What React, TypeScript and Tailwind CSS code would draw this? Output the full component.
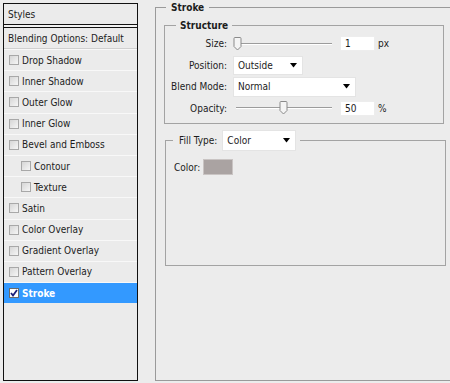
import React from 'react';

const font = { fontFamily: '"DejaVu Sans Condensed", "Liberation Sans", sans-serif' };

const effects: { label: string; indent?: boolean; active?: boolean }[] = [
  { label: 'Drop Shadow' },
  { label: 'Inner Shadow' },
  { label: 'Outer Glow' },
  { label: 'Inner Glow' },
  { label: 'Bevel and Emboss' },
  { label: 'Contour', indent: true },
  { label: 'Texture', indent: true },
  { label: 'Satin' },
  { label: 'Color Overlay' },
  { label: 'Gradient Overlay' },
  { label: 'Pattern Overlay' },
  { label: 'Stroke', active: true },
];

function CheckBox({ checked }: { checked?: boolean }) {
  if (checked) {
    return (
      <span className="w-[10px] h-[10px] border border-[#6b6b6b] bg-white flex items-center justify-center shrink-0">
        <svg width="8" height="8" viewBox="0 0 8 8">
          <path d="M1 4 L3 6.5 L7 1" fill="none" stroke="#1b1f7a" strokeWidth="1.8" />
        </svg>
      </span>
    );
  }
  return <span className="w-[10px] h-[10px] border border-[#a8a8a8] bg-gradient-to-br from-[#d6d6d6] to-[#f6f6f6] shrink-0" />;
}

function Dropdown({ value, width, height }: { value: string; width: string; height: string }) {
  return (
    <div className={`${width} ${height} bg-white flex items-center justify-between pl-[4px] pr-[5px] border border-[#e4e4e4]`}>
      <span>{value}</span>
      <svg width="7" height="5" viewBox="0 0 7 5">
        <path d="M0 0 H7 L3.5 4.5 Z" fill="#000" />
      </svg>
    </div>
  );
}

function Slider({ thumb }: { thumb: number }) {
  return (
    <div className="relative w-[100px] h-[14px]">
      <div className="absolute left-[3px] right-[1px] top-[6px] h-[2px] border-t border-[#9c9c9c] border-b border-b-white" />
      <svg className="absolute top-0" style={{ left: thumb }} width="9" height="14" viewBox="0 0 9 14">
        <path d="M1 1.5 Q1 0.5 2 0.5 H7 Q8 0.5 8 1.5 V9.5 L4.5 13 L1 9.5 Z" fill="#f4f4f4" stroke="#8a8a8a" />
      </svg>
    </div>
  );
}

function NumberBox({ value }: { value: string }) {
  return (
    <div className="w-[35px] h-[15px] bg-white border border-[#ededed] flex items-center pl-[4px]">{value}</div>
  );
}

export default function App() {
  return (
    <div className="w-[450px] h-[383px] bg-[#ececec] overflow-hidden flex text-[10px] text-[#1c1c1c]" style={font}>
      {/* Styles list */}
      <div className="ml-[3px] mt-[3px] w-[135px] h-[378px] border border-[#111] bg-[#ebebeb] flex flex-col shrink-0">
        <div className="h-[21px] flex items-center pl-[4px] border-b border-[#111]">Styles</div>
        <div className="h-[2px] bg-[#f2f2f2]" />
        <div className="h-[22px] flex items-center pl-[4px] border-t border-[#111] border-b border-b-[#d0d0d0]">
          Blending Options: Default
        </div>
        {effects.map((e) => (
          <div
            key={e.label}
            className={`h-[21.2px] flex items-center gap-[3px] border-t border-[#f8f8f8] ${e.indent ? 'pl-[17px]' : 'pl-[5px]'} ${
              e.active ? 'bg-[#3399ff] text-white font-bold' : ''
            }`}
          >
            <CheckBox checked={e.active} />
            <span>{e.label}</span>
          </div>
        ))}
      </div>

      {/* Stroke panel */}
      <fieldset className="ml-[17px] w-[310px] h-[381px] border border-[#9a9a9a] shrink-0">
        <legend className="ml-[10px] px-[5px] font-bold">Stroke</legend>

        <fieldset className="ml-[8px] mt-[3px] w-[280px] h-[106px] border border-[#a3a3a3]">
          <legend className="ml-[11px] px-[4px] font-bold">Structure</legend>
          <div className="flex flex-col">
            <div className="h-[21.5px] flex items-center">
              <span className="w-[62px] text-right">Size:</span>
              <div className="ml-[6px]">
                <Slider thumb={0} />
              </div>
              <div className="ml-[7px]">
                <NumberBox value="1" />
              </div>
              <span className="ml-[3px]">px</span>
            </div>
            <div className="h-[21.5px] flex items-center">
              <span className="w-[62px] text-right">Position:</span>
              <div className="ml-[6px]">
                <Dropdown value="Outside" width="w-[70px]" height="h-[19px]" />
              </div>
            </div>
            <div className="h-[21.5px] flex items-center">
              <span className="w-[62px] text-right">Blend Mode:</span>
              <div className="ml-[6px]">
                <Dropdown value="Normal" width="w-[123px]" height="h-[20px]" />
              </div>
            </div>
            <div className="h-[21.5px] flex items-center">
              <span className="w-[62px] text-right">Opacity:</span>
              <div className="ml-[6px]">
                <Slider thumb={46} />
              </div>
              <div className="ml-[7px]">
                <NumberBox value="50" />
              </div>
              <span className="ml-[3px]">%</span>
            </div>
          </div>
        </fieldset>

        <fieldset className="ml-[9px] mt-[6px] w-[281px] h-[136px] border border-[#a3a3a3]">
          <legend className="ml-[7px] pl-[6px] pr-[4px]">
            <div className="flex items-center gap-[5px]">
              <span>Fill Type:</span>
              <Dropdown value="Color" width="w-[74px]" height="h-[21px]" />
            </div>
          </legend>
          <div className="mt-[8px] pl-[8px] flex items-center gap-[3px]">
            <span>Color:</span>
            <div className="w-[30px] h-[16px] bg-[#aaa3a2] border border-[#c9c4c3]" />
          </div>
        </fieldset>
      </fieldset>
    </div>
  );
}
